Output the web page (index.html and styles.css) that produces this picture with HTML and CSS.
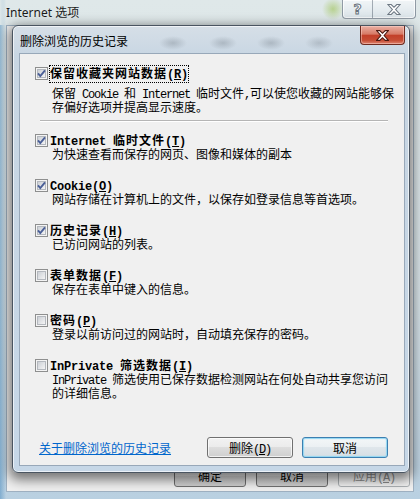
FILE: index.html
```html
<!DOCTYPE html>
<html lang="zh-CN">
<head>
  <meta charset="UTF-8" />
  <meta name="viewport" content="width=device-width, initial-scale=1" />
  <title>删除浏览的历史记录</title>
  <link rel="stylesheet" href="styles.css">
</head>
<body>
  <svg class="defs" aria-hidden="true">
    <defs>
      <linearGradient id="cbg" x1="0" y1="0" x2="1" y2="1">
        <stop offset="0" stop-color="#c9cdd3" />
        <stop offset="1" stop-color="#f7f7f7" />
      </linearGradient>
      <symbol id="cb" viewBox="0 0 13 13">
        <rect x="0.5" y="0.5" width="12" height="12" fill="#f4f4f4" stroke="#8e8f8f" />
        <rect x="2.5" y="2.5" width="8" height="8" fill="url(#cbg)" stroke="#b4b8be" />
      </symbol>
    </defs>
  </svg>

  <div class="desktop">
    <div class="ie-window">
      <div class="ie-titlebar">
        <span class="ie-title">Internet 选项</span>
        <div class="caption-btns">
          <span class="cap cap-help">?</span>
          <span class="cap cap-close">
            <svg width="14" height="11" viewBox="0 0 12 10"><path class="cap-x" d="M0.5 0.5H3.5L6 3L8.5 0.5H11.5L7.5 5L11.5 9.5H8.5L6 7L3.5 9.5H0.5L4.5 5Z" /></svg>
          </span>
        </div>
      </div>
      <div class="ie-client">
        <div class="ie-footer">
          <button class="ie-btn">确定</button>
          <button class="ie-btn">取消</button>
          <button class="ie-btn disabled">应用<span class="en">(<u>A</u>)</span></button>
        </div>
      </div>
    </div>

    <div class="dialog">
      <div class="dlg-titlebar">
        <span class="dlg-title">删除浏览的历史记录</span>
        <span class="dlg-close">
          <svg width="13" height="11" viewBox="0 0 12 10"><path class="close-x" d="M0.5 0.5H3.5L6 3L8.5 0.5H11.5L7.5 5L11.5 9.5H8.5L6 7L3.5 9.5H0.5L4.5 5Z" /></svg>
        </span>
      </div>

      <div class="dlg-client">
        <div class="opt opt-first">
          <div class="opt-head">
            <svg class="chk" viewBox="0 0 13 13"><use href="#cb" /><path class="tick" d="M3 6.3L5.3 9L10 3.3" /></svg>
            <span class="opt-label focus">保留收藏夹网站数据<span class="en">(<u>R</u>)</span></span>
          </div>
          <div class="opt-desc">保留<span class="en"> Cookie </span>和<span class="en"> Internet </span>临时文件<span class="en">,</span>可以使您收藏的网站能够保<br>存偏好选项并提高显示速度。</div>
        </div>

        <div class="sep"></div>

        <div class="opt">
          <div class="opt-head">
            <svg class="chk" viewBox="0 0 13 13"><use href="#cb" /><path class="tick" d="M3 6.3L5.3 9L10 3.3" /></svg>
            <span class="opt-label"><span class="en">Internet </span>临时文件<span class="en">(<u>T</u>)</span></span>
          </div>
          <div class="opt-desc">为快速查看而保存的网页、图像和媒体的副本</div>
        </div>

        <div class="opt">
          <div class="opt-head">
            <svg class="chk" viewBox="0 0 13 13"><use href="#cb" /><path class="tick" d="M3 6.3L5.3 9L10 3.3" /></svg>
            <span class="opt-label"><span class="en">Cookie(<u>O</u>)</span></span>
          </div>
          <div class="opt-desc">网站存储在计算机上的文件，以保存如登录信息等首选项。</div>
        </div>

        <div class="opt">
          <div class="opt-head">
            <svg class="chk" viewBox="0 0 13 13"><use href="#cb" /><path class="tick" d="M3 6.3L5.3 9L10 3.3" /></svg>
            <span class="opt-label">历史记录<span class="en">(<u>H</u>)</span></span>
          </div>
          <div class="opt-desc">已访问网站的列表。</div>
        </div>

        <div class="opt">
          <div class="opt-head">
            <svg class="chk" viewBox="0 0 13 13"><use href="#cb" /></svg>
            <span class="opt-label">表单数据<span class="en">(<u>F</u>)</span></span>
          </div>
          <div class="opt-desc">保存在表单中键入的信息。</div>
        </div>

        <div class="opt">
          <div class="opt-head">
            <svg class="chk" viewBox="0 0 13 13"><use href="#cb" /></svg>
            <span class="opt-label">密码<span class="en">(<u>P</u>)</span></span>
          </div>
          <div class="opt-desc">登录以前访问过的网站时，自动填充保存的密码。</div>
        </div>

        <div class="opt">
          <div class="opt-head">
            <svg class="chk" viewBox="0 0 13 13"><use href="#cb" /></svg>
            <span class="opt-label"><span class="en">InPrivate </span>筛选数据<span class="en">(<u>I</u>)</span></span>
          </div>
          <div class="opt-desc"><span class="en">InPrivate </span>筛选使用已保存数据检测网站在何处自动共享您访问<br>的详细信息。</div>
        </div>

        <div class="dlg-footer">
          <a href="#" class="help-link">关于删除浏览的历史记录</a>
          <button class="win-btn first">删除<span class="en">(<u>D</u>)</span></button>
          <button class="win-btn default">取消</button>
        </div>
      </div>
    </div>
  </div>
</body>
</html>
```

FILE: styles.css
```css
html, body {
  margin: 0;
  padding: 0;
}

body {
  width: 420px;
  height: 499px;
  overflow: hidden;
  font-family: "Noto Sans CJK SC", sans-serif;
  font-size: 12px;
  color: #000;
}

.defs {
  display: block;
  width: 0;
  height: 0;
  overflow: hidden;
}

.en {
  font-family: "Liberation Mono", monospace;
  letter-spacing: -1.2px;
}

.desktop {
  position: relative;
  width: 420px;
  height: 499px;
  overflow: hidden;
}

/* outer "Internet 选项" window behind the dialog */
.ie-window {
  height: 499px;
  display: flex;
  flex-direction: column;
  background:
    radial-gradient(circle at 333px 9px, rgba(150, 190, 70, 0.55), rgba(150, 190, 70, 0) 11px),
    linear-gradient(90deg, rgba(60, 130, 185, 0.45), rgba(60, 130, 185, 0) 6px),
    linear-gradient(#dfe8e9, #d5e0e5 60%, #b9d0e1);
}

.ie-titlebar {
  height: 25px;
  flex-shrink: 0;
  display: flex;
  align-items: flex-start;
  background: linear-gradient(90deg, #dfe8e9 0, rgba(223, 232, 233, 0) 8px);
}

.ie-title {
  padding: 4px 0 0 6px;
  line-height: 18px;
  font-family: "Noto Sans", "Noto Sans CJK SC", sans-serif;
  font-size: 12px;
  color: #1b1b1b;
}

.caption-btns {
  margin-left: auto;
  margin-right: 4px;
  height: 18px;
  display: flex;
  border: 1px solid rgba(70, 85, 100, 0.55);
  border-top: none;
  border-radius: 0 0 4px 4px;
  overflow: hidden;
  background: linear-gradient(#f1f5f7, #dbe4e9);
  box-shadow: inset 0 0 0 1px rgba(255, 255, 255, 0.7);
}

.cap {
  display: flex;
  align-items: center;
  justify-content: center;
}

.cap-help {
  width: 29px;
  border-right: 1px solid rgba(70, 85, 100, 0.45);
  font-family: "DejaVu Sans", sans-serif;
  font-weight: bold;
  font-size: 14px;
  color: #fff;
  -webkit-text-stroke: 1px #69737d;
}

.cap-close {
  width: 42px;
}

.cap-x {
  fill: #fff;
  stroke: #6d7883;
  stroke-width: 1;
}

.ie-client {
  flex: 1;
  margin: 0 6px 7px 6px;
  border: 1px solid #9fb1c2;
  background: #f0f0f0;
  display: flex;
  flex-direction: column;
  justify-content: flex-end;
}

.ie-footer {
  display: flex;
  justify-content: flex-end;
  gap: 10px;
  padding: 0 3px 4px 0;
}

.ie-btn {
  width: 72px;
  height: 23px;
  padding: 0;
  border: 1px solid #707070;
  border-radius: 3px;
  background: linear-gradient(#f2f2f2, #ebebeb 50%, #dddddd 50%, #cfcfcf);
  font-family: "Noto Sans CJK SC", sans-serif;
  font-size: 12px;
  color: #000;
}

.ie-btn.disabled {
  color: #8d8d8d;
  border-color: #adb2b5;
  background: #f4f4f4;
}

/* the modal dialog */
.dialog {
  position: absolute;
  left: 12px;
  top: 25px;
  width: 398px;
  height: 448px;
  box-sizing: border-box;
  display: flex;
  flex-direction: column;
  border: 1px solid #4a5561;
  border-radius: 6px;
  background:
    radial-gradient(ellipse 14px 7px at 160px 17px, rgba(110, 120, 130, 0.35), rgba(110, 120, 130, 0)),
    radial-gradient(ellipse 14px 7px at 210px 17px, rgba(110, 120, 130, 0.35), rgba(110, 120, 130, 0)),
    radial-gradient(ellipse 14px 7px at 258px 17px, rgba(110, 120, 130, 0.35), rgba(110, 120, 130, 0)),
    radial-gradient(ellipse 14px 7px at 306px 17px, rgba(110, 120, 130, 0.3), rgba(110, 120, 130, 0)),
    linear-gradient(#d6dfe7, #c8d6e3 30px, #c6d7e7);
  box-shadow: 0 4px 12px 3px rgba(0, 0, 0, 0.5), inset 0 0 0 1px rgba(255, 255, 255, 0.65);
}

.dlg-titlebar {
  height: 27px;
  flex-shrink: 0;
  display: flex;
  align-items: flex-start;
}

.dlg-title {
  padding: 8px 0 0 7px;
  line-height: 14px;
  font-size: 12px;
  color: #000;
}

.dlg-close {
  margin-left: auto;
  margin-right: 4px;
  width: 45px;
  height: 19px;
  box-sizing: border-box;
  display: flex;
  align-items: center;
  justify-content: center;
  border: 1px solid #6e2a1f;
  border-top: none;
  border-radius: 0 0 4px 4px;
  background: linear-gradient(#eab0a3, #d77a66 45%, #c3402a 52%, #c64d35 80%, #df8470);
  box-shadow: inset 0 0 0 1px rgba(255, 220, 210, 0.45);
}

.close-x {
  fill: #fff;
  stroke: #4a1911;
  stroke-width: 1;
}

.dlg-client {
  flex: 1;
  margin: 0 4px 6px 6px;
  padding: 12px 16px 0 15px;
  border: 1px solid #98a8b9;
  background: #f0f0f0;
  display: flex;
  flex-direction: column;
}

.opt + .opt {
  margin-top: 18px;
}

.opt-head {
  height: 15px;
  display: flex;
  align-items: center;
}

.chk {
  width: 13px;
  height: 13px;
  flex-shrink: 0;
}

.tick {
  fill: none;
  stroke: #4a5f97;
  stroke-width: 1.9;
}

.opt-label {
  margin-left: 1px;
  border: 1px dotted transparent;
  line-height: 13px;
  font-weight: bold;
  letter-spacing: 1px;
  white-space: nowrap;
}

.opt-label .en {
  letter-spacing: -0.2px;
}

.opt-label.focus {
  border-color: #000;
}

.opt-desc {
  padding-left: 17px;
  line-height: 12px;
  white-space: nowrap;
}

.opt-first .opt-desc {
  margin-top: 6px;
}

.sep {
  height: 0;
  margin: 7px 0 11px 5px;
  border-top: 1px solid #b5b5b5;
  border-bottom: 1px solid #fff;
}

.sep + .opt {
  margin-top: 0;
}

.dlg-footer {
  margin-top: 38px;
  height: 21px;
  display: flex;
  align-items: center;
  gap: 9px;
}

.help-link {
  margin-left: 4px;
  color: #0066cc;
  text-decoration: underline;
  line-height: 14px;
}

.win-btn {
  width: 86px;
  height: 21px;
  padding: 0;
  border: 1px solid #707070;
  border-radius: 3px;
  background: linear-gradient(#f2f2f2, #ebebeb 50%, #dddddd 50%, #cfcfcf);
  box-shadow: inset 0 0 0 1px rgba(255, 255, 255, 0.7);
  font-family: "Noto Sans CJK SC", sans-serif;
  font-size: 12px;
  color: #000;
}

.win-btn.first {
  margin-left: auto;
}

.win-btn.default {
  border-color: #3c7fb1;
  background: linear-gradient(#f3f6f8, #ebf0f3 50%, #dfe6eb 50%, #d5dee4);
  box-shadow: inset 0 0 1px 1px #8fd6f2;
}
```
